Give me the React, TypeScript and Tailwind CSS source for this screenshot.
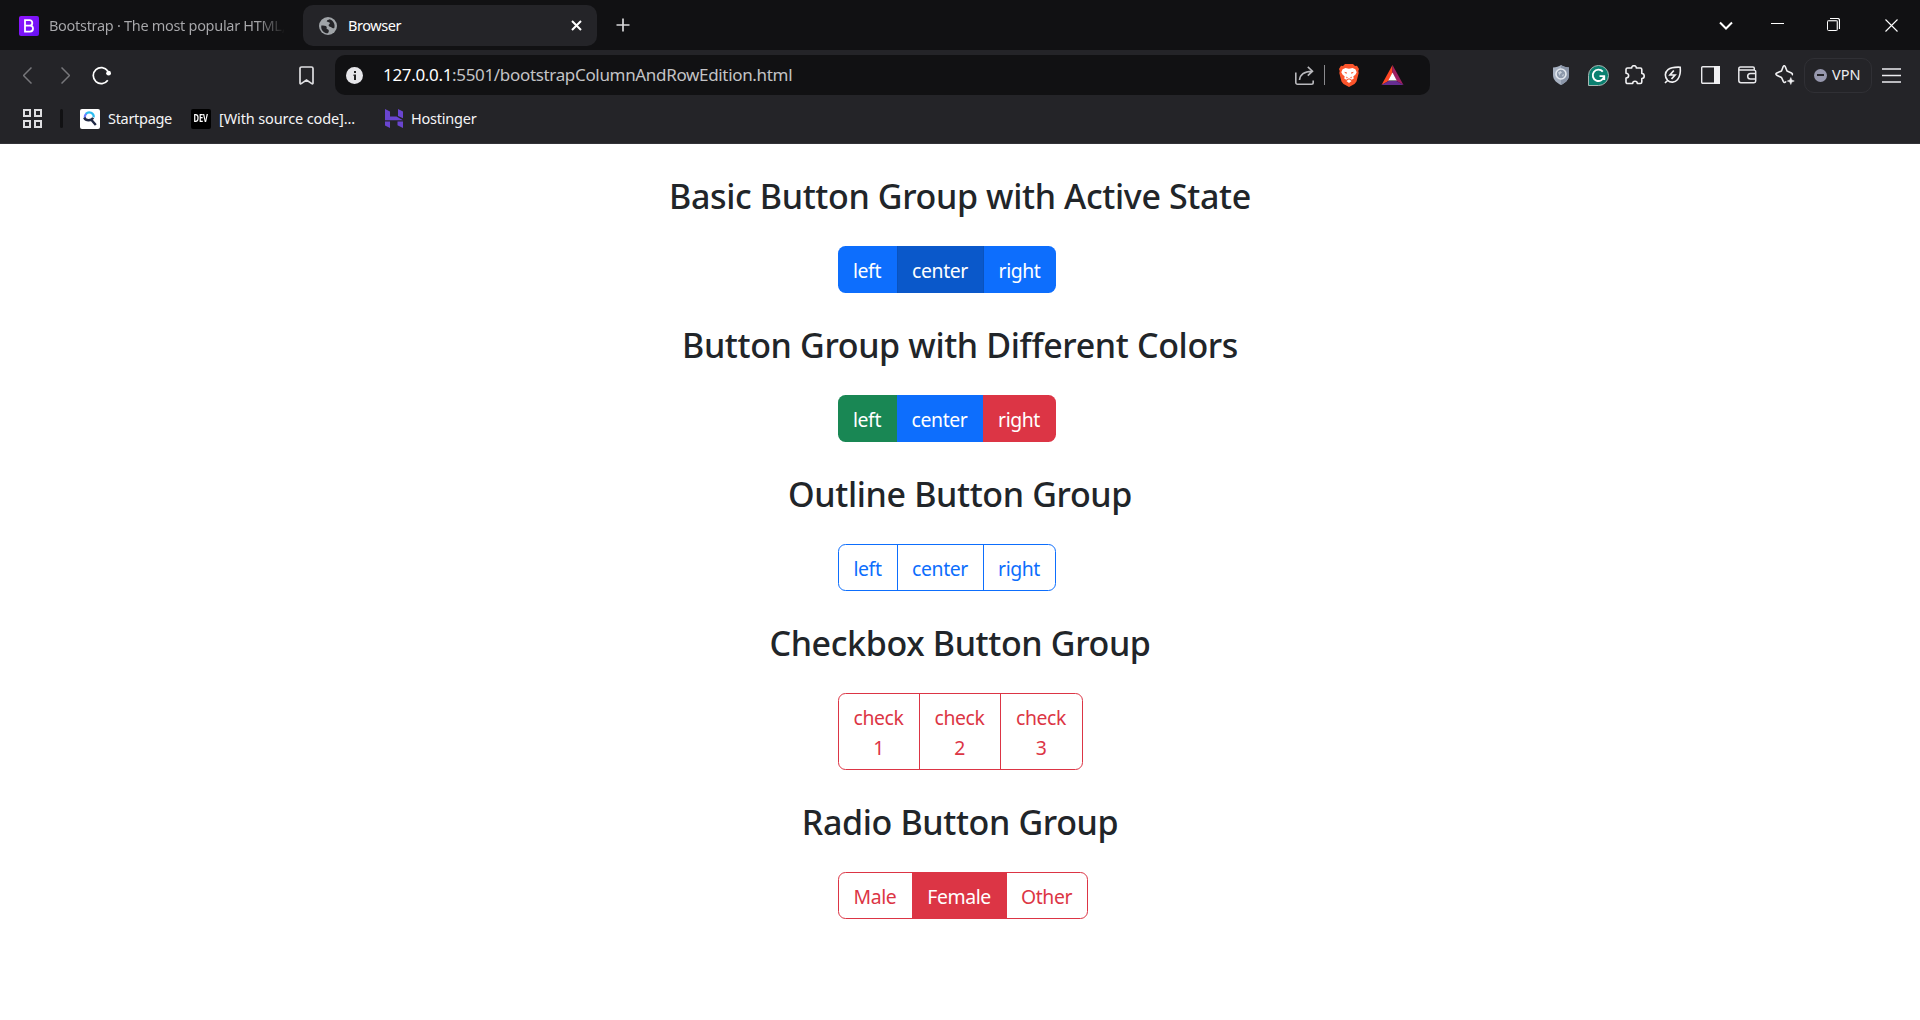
import type { ReactNode } from "react";

function BootstrapLogo() {
  return (
    <div className="flex h-5 w-5 items-center justify-center rounded-[2px] bg-gradient-to-br from-[#9013fe] to-[#6610f2]">
      <svg width="12" height="14" viewBox="0 0 12 14" fill="none" stroke="#fff" strokeWidth="1.8">
        <path d="M2 1.2h4.6a2.7 2.7 0 0 1 0 5.4H2zM2 6.6h5a3 3 0 0 1 0 6H2z" />
      </svg>
    </div>
  );
}

function TabStrip() {
  return (
    <div className="flex h-[50px] items-start bg-[#111113]">
      <div className="flex h-[51px] w-[303px] items-center pl-[19px]">
        <BootstrapLogo />
        <div className="ml-[10px] whitespace-nowrap bg-gradient-to-r from-[#a9a9ac] from-88% to-transparent to-100% bg-clip-text text-[14.5px] tracking-[-0.3px] text-transparent">
          Bootstrap · The most popular HTML,
        </div>
      </div>
      <div className="mt-[5px] flex h-[41px] w-[294px] items-center rounded-[10px] bg-[#242428] pl-4 pr-[15px] text-white">
        <svg width="18" height="18" viewBox="0 0 18 18">
          <circle cx="9" cy="9" r="9" fill="#a0a4a8" />
          <path d="M2.3 8.4c2 .2 4.700.1 5.300 1.300s-.6 1.400.2 2.100 2 .6 2 2-.4 2-1 2.400C4.800 16.200 1.600 13 2.300 8.400zM10.500 2.200c-1 .8-2.700.8-2.700 2.100s2.600.4 3 1.800-1.500 1.300-1.200 2.400 2.200 1.300 3 2.100 1.700 1 2.700.3c1.200-3.500-1-7.500-4.800-8.700z" fill="#242428" />
        </svg>
        <span className="ml-[11px] flex-1 text-[14.5px] tracking-[-0.45px]">Browser</span>
        <svg width="11" height="11" viewBox="0 0 11 11" stroke="#fff" strokeWidth="2">
          <path d="M1 1l9 9M10 1l-9 9" />
        </svg>
      </div>
      <svg className="ml-[19px] mt-[18px]" width="14" height="14" viewBox="0 0 14 14" stroke="#d8d8da" strokeWidth="1.7">
        <path d="M7 .5v13M.5 7h13" />
      </svg>
      <div className="flex flex-1 items-center justify-end pr-[22px] pt-[18px]">
        <svg width="14" height="14" viewBox="0 0 14 14" fill="none" stroke="#fff" strokeWidth="2">
          <path d="M1 4.5l6 6 6-6" />
        </svg>
        <svg className="ml-[38px]" width="13" height="14" viewBox="0 0 13 14">
          <path d="M0 5.5h13" stroke="#fff" />
        </svg>
        <svg className="ml-[43px]" width="13" height="14" viewBox="0 0 13 14" fill="none" stroke="#fff">
          <path d="M3 .5h7.5a2 2 0 0 1 2 2v8.500" strokeWidth="1.2" />
          <path d="M.5 3.500a1 1 0 0 1 1-1h8a1 1 0 0 1 1 1v8a1 1 0 0 1-1 1h-8a1 1 0 0 1-1-1z" />
          <path d="M1 3h9M10 3v9" stroke="#aaa" />
        </svg>
        <svg className="ml-[45px]" width="13" height="13" viewBox="0 0 13 13" stroke="#fff" strokeWidth="1.1">
          <path d="M.5.5l12 12M12.5.5l-12 12" />
        </svg>
      </div>
    </div>
  );
}

function BraveLogo() {
  return (
    <svg className="ml-[14px]" width="20" height="23" viewBox="0 0 20 23">
      <path d="M6 0h8l2 2 2-.2L20 5l-.7 2 .4 2-2.200 8.500-2 2.600L10 23l-5.500-2.900-2-2.600L.3 9l.4-2L0 5l2-3.200L4 2z" fill="#fb542b" />
      <path d="M3.600 5.200L6.500 4l3.500.8 3.500-.8 2.900 1.200 1.300 3-1.200 2.400-2.200 2 .5 1.900-2 1.300L10 14.300l-2.800 1.500-2-1.300.5-1.900-2.200-2L2.300 8.200z" fill="#fff" />
      <path d="M10 15.300l2.600 1.600L10 19l-2.600-2.100z" fill="#fff" />
      <path d="M5 7.800l3 .6-.7 1.600zM15 7.800l-3 .6.7 1.600zM7 12.500l2.300 1.500-1.700.2zM13 12.500L10.700 14l1.700.2z" fill="#fb542b" />
    </svg>
  );
}

function AddressBar() {
  return (
    <div className="ml-[21px] flex h-10 w-[1095px] items-center rounded-[10px] bg-[#111113] pl-[11px]">
      <div className="flex h-[17px] w-[17px] items-center justify-center rounded-full bg-[#e6e6ea]">
        <svg width="4" height="9" viewBox="0 0 4 9" fill="#222">
          <path d="M1 0h2v2H1zM.5 3.5H3V9H1V5H.5z" />
        </svg>
      </div>
      <div className="ml-5 w-[912px] whitespace-nowrap text-[17px] tracking-[-0.33px] text-[#c3c3c6]">
        <span className="text-white">127.0.0.1</span>:5501/bootstrapColumnAndRowEdition.html
      </div>
      <svg width="19" height="19" viewBox="0 0 19 19" fill="none" stroke="#b9b9bd" strokeWidth="1.6">
        <path d="M.8 6.5v10a1.7 1.7 0 0 0 1.7 1.7h14a1.7 1.7 0 0 0 1.7-1.7v-2M4.5 14C5 8.500 8.500 5.500 17 5.200M12.800.8l4.700 4.400-4.700 4.400" />
      </svg>
      <div className="ml-[10px] h-5 w-px bg-[#8a8a8e]" />
      <BraveLogo />
      <svg className="ml-[22px]" width="23" height="20" viewBox="0 0 22 20">
        <path d="M11 0L0 20l7-4 4-8z" fill="#ff4724" />
        <path d="M11 0l11 20-7-4-4-8z" fill="#9e1f63" />
        <path d="M0 20h22l-7-4H7z" fill="#662d91" />
        <path d="M11 7.500L6.800 15.500h8.400z" fill="#fff" />
      </svg>
    </div>
  );
}

function Extensions() {
  return (
    <div className="flex flex-1 items-center pl-[123px]">
      <svg width="16" height="20" viewBox="0 0 16 20">
        <path d="M8 0c2 1.500 5 2.500 8 2.500V10c0 5-4 8-8 10-4-2-8-5-8-10V2.500C3 2.500 6 1.500 8 0z" fill="#a6b0c0" />
        <path d="M8 0c2 1.500 5 2.500 8 2.500V10c0 5-4 8-8 10z" fill="#8a95a8" />
        <circle cx="8" cy="9" r="5" fill="#8d99ab" stroke="#e3e8ee" strokeWidth="1.6" />
        <path d="M5 7.500l2.500-1.500 1.500 1.500-2 1.500v2zM9 10l2-1-1 3z" fill="#c9d0da" />
      </svg>
      <svg className="ml-[19px]" width="21" height="21" viewBox="0 0 21 21" fill="none">
        <path d="M.5 20.500V10.500a10 10 0 1 1 10 10z" fill="#0b8070" stroke="#a7b7b4" />
        <path d="M14.800 6.600a5.700 5.700 0 1 0 1.300 4.500h-4.600M16.200 11v4" stroke="#fff" strokeWidth="1.9" />
      </svg>
      <svg className="ml-4" width="20" height="20" viewBox="0 0 20 20" fill="none" stroke="#f1f1f3" strokeWidth="1.6" strokeLinejoin="round">
        <path d="M2.500 3h4.200C6.500-.1 11.500-.1 11.300 3h4c.900 0 1.500.6 1.500 1.500v4c3.200.1 3.200 4.900 0 5V17c0 .9-.6 1.500-1.500 1.500h-3c0-3-4.600-3-4.600 0H2.500C1.600 18.500 1 17.900 1 17v-4c3.500 0 3.500-4.800 0-4.800V4.500C1 3.600 1.600 3 2.500 3z" />
      </svg>
      <svg className="ml-[19px]" width="18" height="18" viewBox="0 0 18 18" fill="none" stroke="#f1f1f3" strokeWidth="1.6">
        <path d="M1 17l2.600-2.600M3.600 14.400C.5 11 .6 6.500 4 3.700 7 1.300 11.500 1 16.200 1.200c.5 4.800-.2 9.300-2.600 12.300-2.700 3.200-7.100 3.400-10 .9" />
        <path d="M9.800 4.500L6 9h5L7.500 13" strokeWidth="1.7" />
      </svg>
      <svg className="ml-[19px]" width="19" height="18" viewBox="0 0 19 18">
        <rect x=".7" y=".7" width="17.6" height="16.6" rx="1" fill="none" stroke="#e9e9ec" strokeWidth="1.4" />
        <path d="M13 0h6v18h-6z" fill="#f1f1f3" />
      </svg>
      <svg className="ml-[18px]" width="19" height="18" viewBox="0 0 19 18" fill="none" stroke="#e9e9ec" strokeWidth="1.5">
        <path d="M.8 3v11.500c0 1.300.9 2.200 2.200 2.200h13c1 0 1.700-.7 1.700-1.700V5.700c0-1-.7-1.700-1.700-1.700H2C1.300 4 .8 3.500.8 2.800 .8 1.800 1.500 1 2.500 1H15c.8 0 1.300.5 1.300 1.300V4" />
        <path d="M18 7.500h-5.500a2.800 2.800 0 0 0 0 5.600H18" />
      </svg>
      <svg className="ml-[18px]" width="20" height="20" viewBox="0 0 20 20" fill="none" stroke="#f1f1f3" strokeWidth="1.6" strokeLinejoin="round">
        <path d="M11 16.300c-.8 1.300-1.800 1.700-2.600.3L6.500 12.500 1.800 10.200c-1.200-.6-1.200-1.600 0-2.200L6.500 6 8.200 1.500c.5-1 1.500-1 2 0L12 6l4.500 1.900c1.100.5 1.200 1.500.3 2.100" />
        <path d="M15.800 12.500l1 2.500 2.500 1-2.500 1-1 2.500-1-2.500-2.500-1 2.500-1z" fill="#f1f1f3" strokeWidth=".5" />
      </svg>
      <div className="ml-[9px] flex h-[35px] w-[68px] items-center rounded-[10px] border border-[#303035] pl-[9px] text-[14.5px] text-[#ececf0]">
        <div className="mr-[5px] flex h-[13px] w-[13px] items-center justify-center rounded-full bg-[#9798ae]">
          <div className="h-[1.5px] w-[7px] bg-[#242428]" />
        </div>
        <span>VPN</span>
      </div>
      <svg className="ml-[10px]" width="19" height="15" viewBox="0 0 19 15" stroke="#ececef" strokeWidth="1.5">
        <path d="M0 1h19M0 7.500h19M0 14h19" />
      </svg>
    </div>
  );
}

function Toolbar() {
  return (
    <div className="flex h-[50px] items-center pl-[23px]">
      <svg width="9" height="17" viewBox="0 0 9 17" fill="none" stroke="#77777b" strokeWidth="1.5">
        <path d="M8.500.5l-8 8 8 8" />
      </svg>
      <svg className="ml-[29px]" width="9" height="17" viewBox="0 0 9 17" fill="none" stroke="#77777b" strokeWidth="1.5">
        <path d="M.5.5l8 8-8 8" />
      </svg>
      <svg className="ml-[22px]" width="19" height="19" viewBox="0 0 19 19" fill="none" stroke="#fff" strokeWidth="1.7">
        <path d="M15.800 14.200A8 8 0 1 1 15.800 5" />
        <circle cx="16.600" cy="7.200" r="2.400" fill="#fff" stroke="none" />
      </svg>
      <svg className="ml-[188px]" width="15" height="19" viewBox="0 0 15 19" fill="none" stroke="#dedee1" strokeWidth="1.7">
        <path d="M1 2.600C1 1.600 1.700 1 2.600 1h9.800c1 0 1.600.6 1.600 1.600V17c0 .8-.6 1-1.200.6L7.500 14l-5.300 3.600C1.600 18 1 17.700 1 17z" />
      </svg>
      <AddressBar />
      <Extensions />
    </div>
  );
}

function BookmarksBar() {
  return (
    <div className="flex h-[43px] items-center whitespace-nowrap pb-[6px] pl-[23px] text-[14.5px] text-[#f4f4f6]">
      <svg width="19" height="19" viewBox="0 0 19 19" fill="none" stroke="#dedee1" strokeWidth="2">
        <path d="M1 1h6v6H1zM12 1h6v6h-6zM1 12h6v6H1zM12 12h6v6h-6z" />
      </svg>
      <div className="ml-[18px] h-[19px] w-[3px] rounded bg-[#111113]" />
      <svg className="ml-[17px]" width="20" height="20" viewBox="0 0 20 20" fill="none">
        <rect width="20" height="20" rx="2" fill="#fff" />
        <path d="M5 9a4.500 4.500 0 0 1 1.500-4.500" stroke="#6b7cff" strokeWidth="2.2" />
        <path d="M6 4.700a4.500 4.500 0 0 1 7.700 3.600" stroke="#2bbcf0" strokeWidth="2.2" />
        <path d="M4.200 8.600c1.700 3.400 7 3.400 9 .3M11.500 11l4.300 5" stroke="#202945" strokeWidth="2.4" />
      </svg>
      <span className="ml-2 w-[83px] tracking-[-0.3px]">Startpage</span>
      <div className="flex h-5 w-5 items-center justify-center rounded-[2px] bg-black">
        <span className="scale-x-75 text-[10px] font-bold text-white">DEV</span>
      </div>
      <span className="ml-2 w-[166px] tracking-[-0.12px]">[With source code]...</span>
      <svg width="18" height="19" viewBox="0 0 18 19" fill="#6a45d0">
        <path d="M0 0l5 2.600v5h6.500L18 11.200H0zM13 0l5 2.600V9.200l-5-2.200zM0 12.600h5v6.400l-5-2.600zM12.500 12.600H18V19l-5.500-2.800z" />
      </svg>
      <span className="ml-2 tracking-[-0.22px]">Hostinger</span>
    </div>
  );
}

function Title({ children }: { children: ReactNode }) {
  return <h3 className="h-[42px] whitespace-nowrap pt-[2px] text-center text-[34px] font-medium leading-[42px] tracking-[-0.36px] text-[#212529]">{children}</h3>;
}

function ButtonGroup({ className, children }: { className: string; children: ReactNode }) {
  return <div className={`mb-[29px] ml-[838px] mt-[31px] flex overflow-hidden rounded-[7.5px] text-[19.4px] leading-[30px] tracking-[-0.4px] ${className}`}>{children}</div>;
}

function Button({ className, children }: { className: string; children: ReactNode }) {
  return <button className={`flex items-center justify-center whitespace-nowrap pr-px pt-[2px] text-center ${className}`}>{children}</button>;
}

export default function App() {
  return (
    <div className="h-[1020px] w-[1920px] overflow-hidden bg-white font-['Noto_Sans','Open_Sans',sans-serif]">
      <header className="h-[144px] border-b border-[#323237] bg-[#242428]">
        <TabStrip />
        <Toolbar />
        <BookmarksBar />
      </header>
      <main className="pt-[29px]">
        <Title>Basic Button Group with Active State</Title>
        <ButtonGroup className="h-[47px] w-[218px] bg-[#0d6efd] text-white">
          <Button className="w-[59px]">left</Button>
          <Button className="w-[87px] border-x border-[#0a53be] bg-[#0a58ca]">center</Button>
          <Button className="w-[72px]">right</Button>
        </ButtonGroup>

        <Title>Button Group with Different Colors</Title>
        <ButtonGroup className="h-[47px] w-[218px] text-white">
          <Button className="w-[59px] bg-[#198754]">left</Button>
          <Button className="w-[86px] bg-[#0d6efd]">center</Button>
          <Button className="w-[73px] bg-[#dc3545]">right</Button>
        </ButtonGroup>

        <Title>Outline Button Group</Title>
        <ButtonGroup className="h-[47px] w-[218px] border border-[#0d6efd] text-[#0d6efd]">
          <Button className="w-[58px]">left</Button>
          <Button className="w-[87px] border-x border-[#0d6efd]">center</Button>
          <Button className="w-[71px]">right</Button>
        </ButtonGroup>

        <Title>Checkbox Button Group</Title>
        <ButtonGroup className="h-[77px] w-[245px] border border-[#dc3545] text-[#dc3545]">
          <Button className="w-[80px]">check<br />1</Button>
          <Button className="w-[82px] border-x border-[#dc3545]">check<br />2</Button>
          <Button className="w-[81px]">check<br />3</Button>
        </ButtonGroup>

        <Title>Radio Button Group</Title>
        <ButtonGroup className="h-[47px] w-[250px] border border-[#dc3545] text-[#dc3545]">
          <Button className="w-[73px]">Male</Button>
          <Button className="w-[95px] bg-[#dc3545] text-white">Female</Button>
          <Button className="w-[80px]">Other</Button>
        </ButtonGroup>
      </main>
    </div>
  );
}
